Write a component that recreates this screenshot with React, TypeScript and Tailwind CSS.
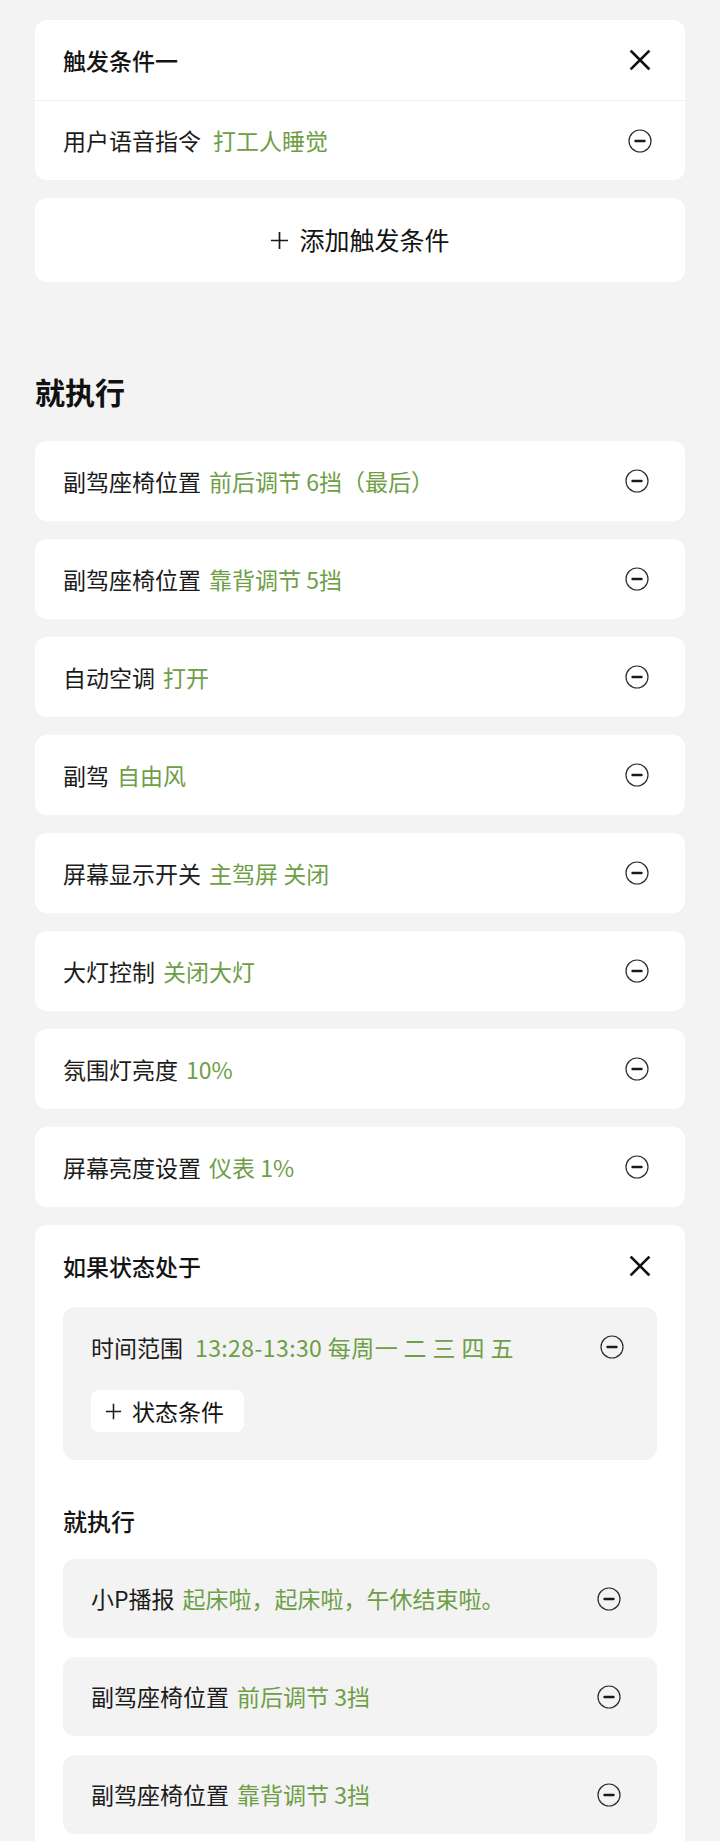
import React from "react";

const font = "font-['Noto_Sans_CJK_SC','Noto_Sans',sans-serif]";

function MinusIcon() {
  return (
    <svg width="24" height="24" viewBox="0 0 24 24" fill="none">
      <circle cx="12" cy="12" r="11" stroke="#2b2b2b" strokeWidth="1.2" />
      <line x1="7.5" y1="12" x2="16.5" y2="12" stroke="#1a1a1a" strokeWidth="2.4" strokeLinecap="round" />
    </svg>
  );
}

function CloseIcon() {
  return (
    <svg width="24" height="24" viewBox="0 0 24 24" fill="none">
      <path d="M3.5 3.5 L20.5 20.5 M20.5 3.5 L3.5 20.5" stroke="#111" strokeWidth="2.6" strokeLinecap="square" />
    </svg>
  );
}

function PlusIcon({ size }: { size: number }) {
  return (
    <svg width={size} height={size} viewBox="0 0 20 20" fill="none">
      <path d="M10 1 V19 M1 10 H19" stroke="#1a1a1a" strokeWidth="1.8" />
    </svg>
  );
}

function Row({ label, value, inner, first }: { label: string; value: string; inner?: boolean; first?: boolean }) {
  let cls = "h-[80px] rounded-xl bg-white flex items-center justify-between pl-7 pr-9";
  if (inner) cls = "h-[79px] rounded-xl bg-[#f3f3f3] flex items-center justify-between pl-7 pr-9";
  if (first) cls = "h-[79px] rounded-b-xl bg-white flex items-center justify-between pl-7 pr-[33px]";
  return (
    <div className={cls}>
      <div className="text-[23px] text-[#1c1c1c] whitespace-nowrap">
        {label}
        <span className={first ? "ml-3 text-[#6e9e46]" : "ml-2 text-[#6e9e46]"}>{value}</span>
      </div>
      <MinusIcon />
    </div>
  );
}

const actions = [
  ["副驾座椅位置", "前后调节 6挡（最后）"],
  ["副驾座椅位置", "靠背调节 5挡"],
  ["自动空调", "打开"],
  ["副驾", "自由风"],
  ["屏幕显示开关", "主驾屏 关闭"],
  ["大灯控制", "关闭大灯"],
  ["氛围灯亮度", "10%"],
  ["屏幕亮度设置", "仪表 1%"],
];

const innerActions = [
  ["小P播报", "起床啦，起床啦，午休结束啦。"],
  ["副驾座椅位置", "前后调节 3挡"],
  ["副驾座椅位置", "靠背调节 3挡"],
];

export default function App() {
  return (
    <div className={`${font} bg-[#f3f3f3] min-h-screen px-[35px] pt-5 pb-10`}>
      <section className="rounded-xl bg-white">
        <div className="h-20 flex items-center justify-between pl-7 pr-[33px]">
          <span className="text-[23px] font-medium text-[#141414]">触发条件一</span>
          <CloseIcon />
        </div>
        <div className="h-px bg-[#efefef]" />
        <Row label="用户语音指令" value="打工人睡觉" first />
      </section>

      <button className="mt-[18px] w-full h-[84px] rounded-xl bg-white flex items-center justify-center gap-[10px]">
        <PlusIcon size={19} />
        <span className="text-[25px] text-[#141414]">添加触发条件</span>
      </button>

      <h2 className="mt-[90px] mb-[30px] text-[30px] leading-[39px] font-semibold text-[#111]">就执行</h2>

      <div className="flex flex-col gap-[18px]">
        {actions.map(([l, v], i) => (
          <Row key={i} label={l} value={v} />
        ))}
      </div>

      <section className="mt-[18px] rounded-xl bg-white px-7 pb-10">
        <div className="h-[82px] flex items-center justify-between pr-[5px]">
          <span className="text-[23px] font-medium text-[#141414]">如果状态处于</span>
          <CloseIcon />
        </div>

        <div className="rounded-xl bg-[#f3f3f3] pl-7 pr-[33px] pb-7">
          <div className="h-20 flex items-center justify-between">
            <div className="text-[23px] text-[#1c1c1c] whitespace-nowrap">
              时间范围
              <span className="ml-3 text-[#6e9e46] tracking-[0.4px]">13:28-13:30 每周一 二 三 四 五</span>
            </div>
            <MinusIcon />
          </div>
          <div className="mt-[3px] inline-flex items-center gap-[10px] h-[42px] rounded-lg bg-white pl-[14px] pr-[20px]">
            <PlusIcon size={17} />
            <span className="text-[23px] text-[#141414]">状态条件</span>
          </div>
        </div>

        <h3 className="mt-[45px] mb-[22px] text-[24px] leading-8 font-medium text-[#141414]">就执行</h3>

        <div className="flex flex-col gap-[19px]">
          {innerActions.map(([l, v], i) => (
            <Row key={i} label={l} value={v} inner />
          ))}
        </div>
      </section>
    </div>
  );
}
